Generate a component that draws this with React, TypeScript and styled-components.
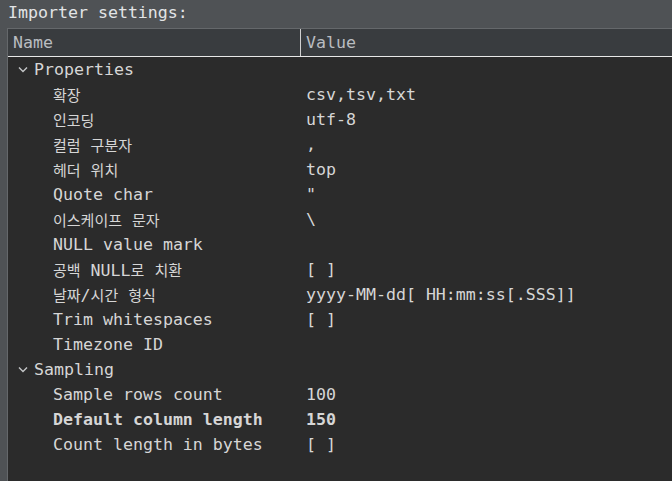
import styled, { createGlobalStyle } from "styled-components";
import React from "react";

type Item = { name: string; value?: string; bold?: boolean };
type Group = { title: string; items: Item[] };

const groups: Group[] = [
  {
    title: "Properties",
    items: [
      { name: "확장", value: "csv,tsv,txt" },
      { name: "인코딩", value: "utf-8" },
      { name: "컬럼 구분자", value: "," },
      { name: "헤더 위치", value: "top" },
      { name: "Quote char", value: '"' },
      { name: "이스케이프 문자", value: "\\" },
      { name: "NULL value mark" },
      { name: "공백 NULL로 치환", value: "[ ]" },
      { name: "날짜/시간 형식", value: "yyyy-MM-dd[ HH:mm:ss[.SSS]]" },
      { name: "Trim whitespaces", value: "[ ]" },
      { name: "Timezone ID" },
    ],
  },
  {
    title: "Sampling",
    items: [
      { name: "Sample rows count", value: "100" },
      { name: "Default column length", value: "150", bold: true },
      { name: "Count length in bytes", value: "[ ]" },
    ],
  },
];

// split hangul runs so they can use a narrower CJK size
function mixed(text: string) {
  const parts = text.split(/([\uac00-\ud7a3]+)/);
  return parts.map((p, i) =>
    /[\uac00-\ud7a3]/.test(p) ? <Ko key={i}>{p}</Ko> : <React.Fragment key={i}>{p}</React.Fragment>
  );
}

export default function App() {
  return (
    <>
      <GlobalStyle />
      <Page>
        <Title>Importer settings:</Title>
        <Table>
          <HeaderRow>
            <HeadCell>Name</HeadCell>
            <HeadCell divider>Value</HeadCell>
          </HeaderRow>
          {groups.map((g) => (
            <React.Fragment key={g.title}>
              <GroupRow>
                <Chevron width="10" height="7" viewBox="0 0 10 7">
                  <polyline points="1,1.5 5,5.5 9,1.5" fill="none" stroke="#c4c6c8" strokeWidth="1.4" />
                </Chevron>
                {g.title}
              </GroupRow>
              {g.items.map((it) => (
                <Row key={it.name} bold={it.bold}>
                  <NameCell>{mixed(it.name)}</NameCell>
                  <ValueCell>{it.value}</ValueCell>
                </Row>
              ))}
            </React.Fragment>
          ))}
        </Table>
      </Page>
    </>
  );
}

const GlobalStyle = createGlobalStyle`
  html, body {
    margin: 0;
    padding: 0;
    background: #2b2b2b;
  }
`;

const Page = styled.div`
  width: 672px;
  height: 481px;
  display: flex;
  flex-direction: column;
  background: #4f5255;
  font-family: "DejaVu Sans Mono", "Noto Sans CJK KR", monospace;
  font-size: 16.6px;
  color: #d6d6d6;
  overflow: hidden;
`;

const Title = styled.div`
  height: 28px;
  line-height: 26px;
  padding-left: 8px;
  color: #e2e4e6;
`;

const Table = styled.div`
  flex: 1;
  margin-left: 7px;
  border-left: 1px solid #65686b;
  border-top: 1px solid #65686b;
  background: #2b2b2b;
`;

const HeaderRow = styled.div`
  display: grid;
  grid-template-columns: 292px 1fr;
  height: 27px;
  background: #393c3f;
  border-bottom: 1px solid #e8e8e8;
`;

const HeadCell = styled.div<{ divider?: boolean }>`
  line-height: 27px;
  padding-left: 5px;
  color: #b9bdc1;
  border-left: ${(p) => (p.divider ? "1px solid #d0d0d0" : "none")};
`;

const GroupRow = styled.div`
  height: 25px;
  display: flex;
  align-items: center;
  padding-left: 10px;
  gap: 6px;
`;

const Chevron = styled.svg`
  flex: none;
`;

const Row = styled.div<{ bold?: boolean }>`
  display: grid;
  grid-template-columns: 293px 1fr;
  height: 25px;
  line-height: 25px;
  font-weight: ${(p) => (p.bold ? 700 : 400)};
  white-space: pre;
`;

const NameCell = styled.div`
  padding-left: 45px;
`;

const ValueCell = styled.div`
  padding-left: 5px;
`;

const Ko = styled.span`
  font-family: "Noto Sans CJK KR", sans-serif;
  font-size: 15px;
`;
